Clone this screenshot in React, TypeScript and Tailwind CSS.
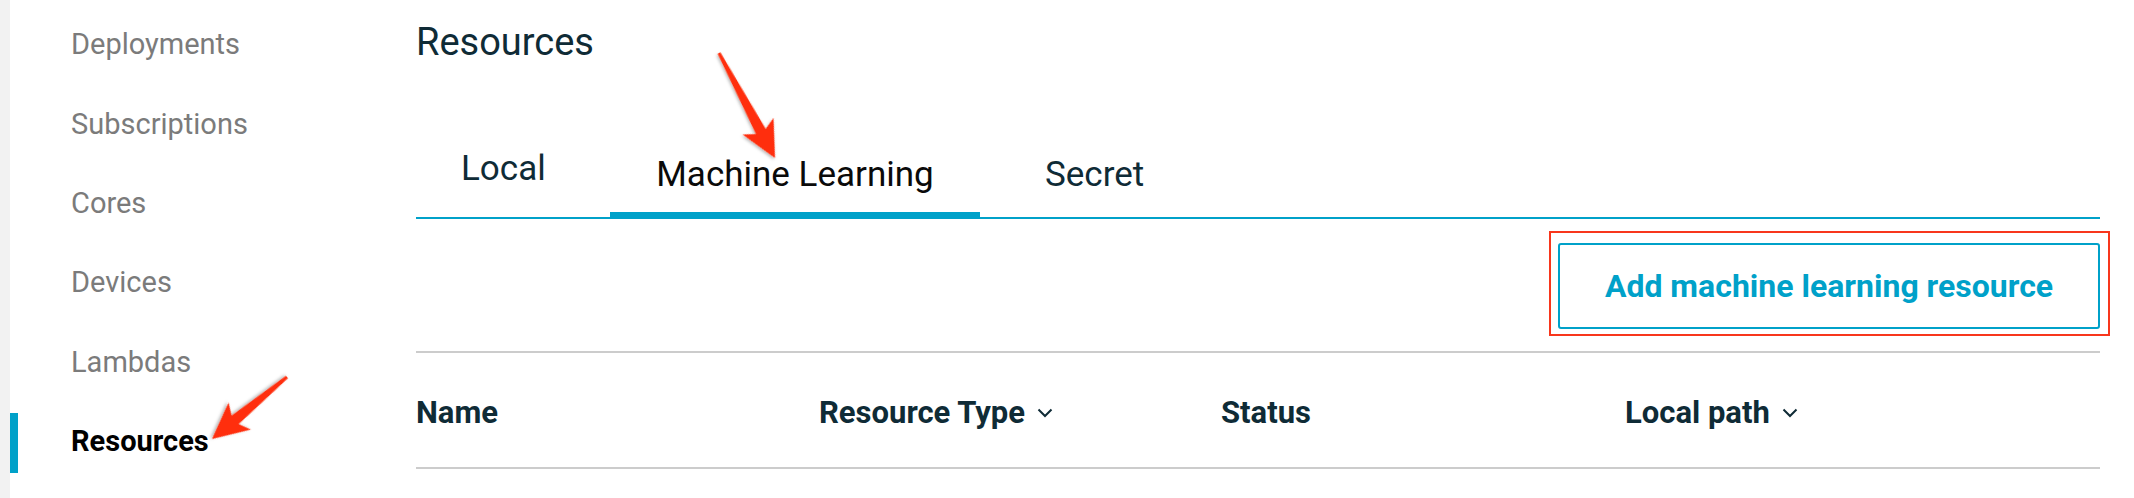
import React from 'react';

interface ArrowProps {
    from: [number, number];
    to: [number, number];
}

// Red annotation arrow (skitch style), drawn pointing right then rotated into place
const Arrow: React.FC<ArrowProps> = ({ from, to }) => {
    const dx = to[0] - from[0];
    const dy = to[1] - from[1];
    const len = Math.sqrt(dx * dx + dy * dy);
    const angle = (Math.atan2(dy, dx) * 180) / Math.PI;
    const pts = [
        [0, -1.4],
        [len - 30, -5.5],
        [len - 36, -17.5],
        [len, 0],
        [len - 36, 17.5],
        [len - 30, 5.5],
        [0, 1.4],
    ]
        .map((p) => p.join(','))
        .join(' ');

    return (
        <g transform={`translate(${from[0]} ${from[1]}) rotate(${angle})`} filter="url(#arrowShadow)">
            <polygon points={pts} fill="#ff2d0b" />
        </g>
    );
};

const navItems = ['Deployments', 'Subscriptions', 'Cores', 'Devices', 'Lambdas', 'Resources'];

const Chevron = () => (
    <svg width="16" height="10" viewBox="0 0 16 10" fill="none">
        <polyline points="1.5,1.5 8,8 14.5,1.5" stroke="#0f2b36" strokeWidth="2" />
    </svg>
);

export default function App() {
    return (
        <div className="relative flex h-[498px] w-[2134px] overflow-hidden bg-white font-['Roboto',sans-serif]">
            {/* left edge strip */}
            <div className="w-[10px] bg-[#f2f2f2]" />

            {/* Sidebar */}
            <nav className="w-[406px] pt-[5px]">
                {navItems.map((item) => {
                    const active = item === 'Resources';
                    return (
                        <div key={item} className="flex h-[79.4px] items-center">
                            <div className={active ? 'mt-[2px] h-[60px] w-[8px] bg-[#00a1c9]' : 'h-[60px] w-[8px]'} />
                            <span
                                className={`ml-[53px] text-[29px] leading-none ${active ? 'font-bold text-black' : 'text-[#7b7b7b]'}`}
                            >
                                {item}
                            </span>
                        </div>
                    );
                })}
            </nav>

            {/* Main content */}
            <main className="flex w-[1684px] flex-col">
                <h1 className="pt-[23px] text-[38px] leading-none font-normal text-[#0f2b36]">Resources</h1>

                {/* Tabs */}
                <div className="flex h-[158px] items-end border-b-2 border-[#00a1c9]">
                    <div className="-mb-[2px] w-[194px] pb-[33px] pl-[45px] text-[35px] leading-none text-[#0f2b36]">
                        Local
                    </div>
                    <div className="-mb-[2px] w-[370px] border-b-[7px] border-[#00a1c9] pb-[20px] text-center text-[35px] leading-none text-[#0a0a0a]">
                        Machine Learning
                    </div>
                    <div className="-mb-[2px] pb-[27px] pl-[65px] text-[35px] leading-none text-[#0f2b36]">Secret</div>
                </div>

                {/* Action */}
                <div className="flex justify-end pt-[24px] pb-[22px]">
                    <div className="relative">
                        <button className="flex h-[86px] w-[542px] items-center justify-center rounded-[3px] border-2 border-[#00a1c9] bg-white text-[32px] leading-none font-bold text-[#00a1c9]">
                            Add machine learning resource
                        </button>
                        <div className="pointer-events-none absolute -top-[12px] -right-[10px] -bottom-[7px] -left-[9px] border-2 border-[#f8361c]" />
                    </div>
                </div>

                {/* Table header */}
                <div className="grid grid-cols-[403px_402px_404px_1fr] border-y-2 border-[#cccccc] pt-[44px] pb-[39px] text-[31px] leading-none font-bold text-[#0f2b36]">
                    <div>Name</div>
                    <div className="flex items-center gap-[12px]">
                        <span>Resource Type</span>
                        <Chevron />
                    </div>
                    <div>Status</div>
                    <div className="flex items-center gap-[12px]">
                        <span>Local path</span>
                        <Chevron />
                    </div>
                </div>
            </main>

            {/* Annotation arrows */}
            <svg className="pointer-events-none absolute inset-0" width="2134" height="498">
                <defs>
                    <filter id="arrowShadow" x="-20%" y="-20%" width="140%" height="140%">
                        <feDropShadow dx="1" dy="1.5" stdDeviation="1.5" floodColor="#000" floodOpacity="0.3" />
                    </filter>
                </defs>
                <Arrow from={[719, 53]} to={[775, 158]} />
                <Arrow from={[287, 377]} to={[212, 439]} />
            </svg>
        </div>
    );
}
